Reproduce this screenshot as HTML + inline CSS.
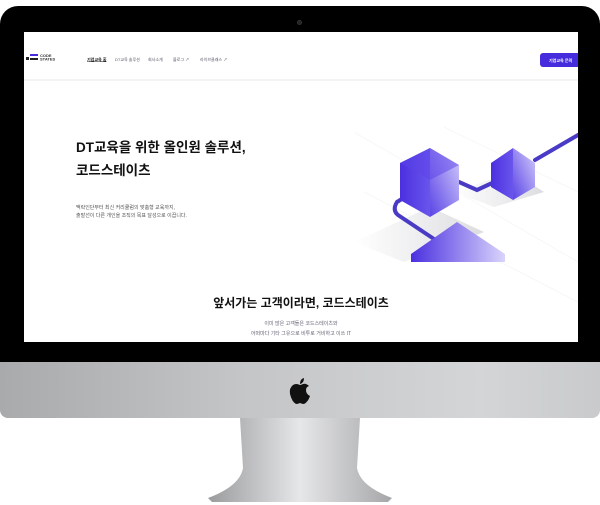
<!DOCTYPE html>
<html><head><meta charset="utf-8"><style>
*{margin:0;padding:0;box-sizing:border-box}
body{width:600px;height:505px;background:#fff;position:relative;overflow:hidden;font-family:"Liberation Sans","Noto Sans CJK KR",sans-serif}
.bezel{position:absolute;left:0;top:6px;width:600px;height:360px;background:#000;border-radius:18px 18px 0 0}
.cam{position:absolute;left:297px;top:14px;width:5px;height:5px;border-radius:50%;background:#222;border:1px solid #333}
.screen{position:absolute;left:24px;top:32px;width:554px;height:310px;background:#fff;overflow:hidden}
.chin{position:absolute;left:0;top:362px;width:600px;height:56px;background:linear-gradient(90deg,#a9aaac,#c4c5c7 40%,#d4d5d7 80%,#c9cacc);border-radius:0 0 8px 8px}
.nav{position:absolute;left:0;top:0;width:554px;height:49px;border-bottom:2px solid #f4f4f6}
.sm{position:absolute;font-size:10px;transform:scale(.5);transform-origin:0 0;white-space:nowrap}
.nav .sm{top:25px;color:#556;font-size:8px}
.btn{position:absolute;left:516px;top:21px;width:40px;height:14px;background:#452cdd;border-radius:3px}
h1{position:absolute;left:52px;top:104px;font-size:13.5px;line-height:23px;font-weight:bold;color:#111}
.sub{left:52px;top:172px;line-height:16px;color:#555}
h2{position:absolute;left:0;width:554px;text-align:center;top:262px;font-size:12px;font-weight:bold;color:#111}
.c2{width:1108px;text-align:center;left:0;color:#667}
</style></head><body>
<div class="bezel"><div class="cam"></div></div>
<div class="screen">
 <div class="nav">
  <div style="position:absolute;left:2px;top:25px;width:3px;height:3px;background:#222"></div>
  <div style="position:absolute;left:6px;top:22px;width:8px;height:2px;background:#452cdd"></div>
  <div style="position:absolute;left:6px;top:26px;width:8px;height:2px;background:#222"></div>
  <div class="sm" style="left:16px;top:22px;font-size:8px;line-height:7px;font-weight:bold;color:#333">CODE<br>STATES</div>
  <span class="sm" style="left:63px;color:#111;font-weight:bold;text-decoration:underline">기업교육 홈</span>
  <span class="sm" style="left:91px">DT교육 솔루션</span>
  <span class="sm" style="left:124px">회사소개</span>
  <span class="sm" style="left:149px">블로그 ↗</span>
  <span class="sm" style="left:176px">라이브클래스 ↗</span>
  <div class="btn"></div>
  <span class="sm" style="left:525px;top:26px;color:#fff;font-weight:bold">기업교육 문의</span>
 </div>
 <h1>DT교육을 위한 올인원 솔루션,<br>코드스테이츠</h1>
 <div class="sm sub">맥락인단부터 최신 커리큘럼의 맞춤형 교육까지,<br>출발선이 다른 개인을 조직의 목표 달성으로 이끕니다.</div>
 <svg style="position:absolute;left:0;top:0" width="554" height="310">
  <defs>
   <linearGradient id="g" x1="0" x2="1"><stop offset="0" stop-color="#4a30e0"/><stop offset="1" stop-color="#6a55ec"/></linearGradient>
   <linearGradient id="r" x1="0" x2="1" y1="1" y2="0"><stop offset="0" stop-color="#5a44e6"/><stop offset="1" stop-color="#d4cefb"/></linearGradient>
   <linearGradient id="g2" x1="0" x2="1"><stop offset="0" stop-color="#4a30e0"/><stop offset="1" stop-color="#d9d4fb"/></linearGradient>
   <linearGradient id="sh" x1="1" x2="0"><stop offset="0" stop-color="#dcdde0"/><stop offset="1" stop-color="#fff"/></linearGradient>
  </defs>
  <g stroke="#f2f2f2" stroke-width="0.6"><line x1="330" y1="100" x2="554" y2="230"/><line x1="340" y1="160" x2="554" y2="270"/><line x1="420" y1="95" x2="554" y2="160"/></g>
  <polygon points="330,210 406,175 460,200 380,230" fill="url(#sh)"/>
  <polygon points="430,160 489,140 520,160 470,175" fill="url(#sh)"/>
  <path d="M435 150 L453 158 L479 146 M511 128 L554 103" stroke="#4a3bc7" stroke-width="4" fill="none" stroke-linecap="round"/>
  <path d="M389 160 L373 170 Q368 178 374 183 L410 207" stroke="#4a3bc7" stroke-width="4" fill="none" stroke-linecap="round"/>
  <polygon points="376,131 406,116 406,185 376,168" fill="url(#g)"/>
  <polygon points="406,116 435,133 435,168 406,185" fill="url(#r)"/>
  <polygon points="376,131 406,116 435,133 406,148" fill="#5b44ea" opacity=".5"/>
  <polygon points="467,131 489,116 489,168 467,155" fill="url(#g)"/>
  <polygon points="489,116 511,131 511,155 489,168" fill="url(#r)"/>
  <polygon points="387,222 433,190 481,222 481,230 387,230" fill="url(#g2)"/>
 </svg>
 <h2>앞서가는 고객이라면, 코드스테이츠</h2>
 <div class="sm c2" style="top:287px">이미 많은 고객들은 코드스테이츠와</div>
 <div class="sm c2" style="top:297px">어떠마다 기타 그유으로 비투로 거비하고 이쓰 IT</div>
</div>
<div class="chin"></div>
<svg style="position:absolute;left:288px;top:377px" width="24" height="28" viewBox="0 0 24 28">
 <path d="M16 1 Q16 6 12 7 Q12 2 16 1Z" fill="#111"/>
 <path d="M12 8 Q8 6 5 8 Q1 11 2 17 Q4 25 8 27 Q10 27 12 26 Q14 27 16 27 Q20 25 22 19 Q18 17 18 13 Q18 10 21 9 Q18 6 15 7 Q13 8 12 8Z" fill="#111"/>
</svg>
<svg style="position:absolute;left:0;top:418px" width="600" height="87">
 <defs><linearGradient id="st" x1="0" x2="1"><stop offset="0" stop-color="#9a9b9d"/><stop offset=".5" stop-color="#e6e7e8"/><stop offset="1" stop-color="#a5a6a8"/></linearGradient></defs>
 <path d="M240 0 L360 0 L357 50 Q360 68 392 80 L388 84 L212 84 L208 80 Q240 68 243 50 Z" fill="url(#st)"/>
</svg>
</body></html>
